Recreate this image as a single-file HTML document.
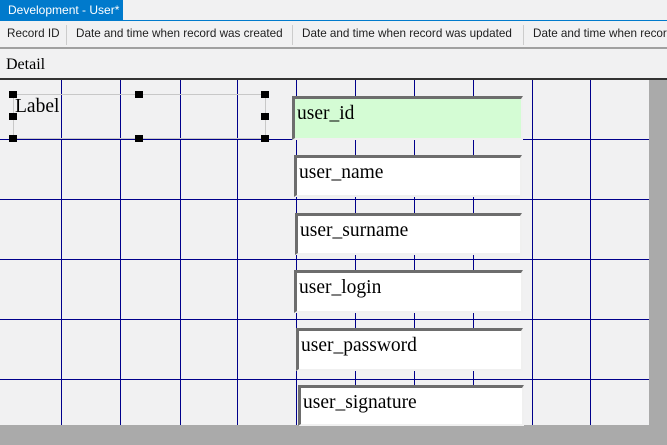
<!DOCTYPE html><html><head><style>
body{margin:0;width:667px;height:445px;overflow:hidden;background:#f1f1f2;font-family:"Liberation Sans",sans-serif;position:relative}
div{position:absolute;box-sizing:border-box}
.t{font-size:11.7px;color:#1e1e1e;top:27px;white-space:nowrap}
.sep{top:25px;width:1px;height:20px;background:#ccc}
.v{width:1px;top:80px;height:345px;background:#00008b}
.h{height:1px;left:0;width:649px;background:#00008b}
.f{background:#fff;border-top:3px solid #6d6d6d;border-left:3px solid #6d6d6d;border-bottom:2px solid #f0f0f0;border-right:2px solid #f0f0f0;font-family:"Liberation Serif",serif;font-size:19.5px;padding:4px 0 0 2px;color:#000;white-space:nowrap}
.k{width:8px;height:7px;background:#000}
</style></head><body>
<div style="left:0;top:0;width:123px;height:20px;background:#007acc;color:#fff;font-size:12px;padding:3px 0 0 8px">Development - User*</div>
<div style="left:0;top:20px;width:667px;height:1px;background:#007acc"></div>
<div class="t" style="left:7px">Record ID</div><div class="sep" style="left:66px"></div>
<div class="t" style="left:76px">Date and time when record was created</div><div class="sep" style="left:292px"></div>
<div class="t" style="left:302px">Date and time when record was updated</div><div class="sep" style="left:523px"></div>
<div class="t" style="left:533px">Date and time when record</div>
<div style="left:0;top:47px;width:667px;height:2px;background:#a0a0a0"></div>
<div style="left:6px;top:56px;font-family:'Liberation Serif',serif;font-size:16px">Detail</div>
<div style="left:0;top:78px;width:667px;height:2px;background:#333"></div>
<div class="v" style="left:61px"></div><div class="v" style="left:120px"></div><div class="v" style="left:180px"></div><div class="v" style="left:237px"></div><div class="v" style="left:296px"></div><div class="v" style="left:355px"></div><div class="v" style="left:414px"></div><div class="v" style="left:473px"></div><div class="v" style="left:532px"></div><div class="v" style="left:590px"></div>
<div class="h" style="top:139px"></div><div class="h" style="top:199px"></div><div class="h" style="top:259px"></div><div class="h" style="top:319px"></div><div class="h" style="top:379px"></div>
<div style="left:649px;top:80px;width:18px;height:365px;background:#aaa"></div>
<div style="left:0;top:425px;width:667px;height:20px;background:#aaa"></div>
<div style="left:13px;top:94px;width:253px;height:45px;border:1px solid #c8c8c8"></div>
<div style="left:15px;top:96px;font-family:'Liberation Serif',serif;font-size:19.5px">Label</div>
<div class="k" style="left:9px;top:91px"></div><div class="k" style="left:135px;top:91px"></div><div class="k" style="left:261px;top:91px"></div>
<div class="k" style="left:9px;top:113px"></div><div class="k" style="left:261px;top:113px"></div>
<div class="k" style="left:9px;top:135px"></div><div class="k" style="left:135px;top:135px"></div><div class="k" style="left:261px;top:135px"></div>
<div class="f" style="left:292px;top:96px;width:231px;height:44px;background:#d4fcd4">user_id</div>
<div class="f" style="left:294px;top:155px;width:228px;height:42px">user_name</div>
<div class="f" style="left:295px;top:213px;width:227px;height:42px">user_surname</div>
<div class="f" style="left:294px;top:270px;width:229px;height:43px">user_login</div>
<div class="f" style="left:296px;top:328px;width:227px;height:43px">user_password</div>
<div class="f" style="left:298px;top:385px;width:226px;height:41px">user_signature</div>
</body></html>
